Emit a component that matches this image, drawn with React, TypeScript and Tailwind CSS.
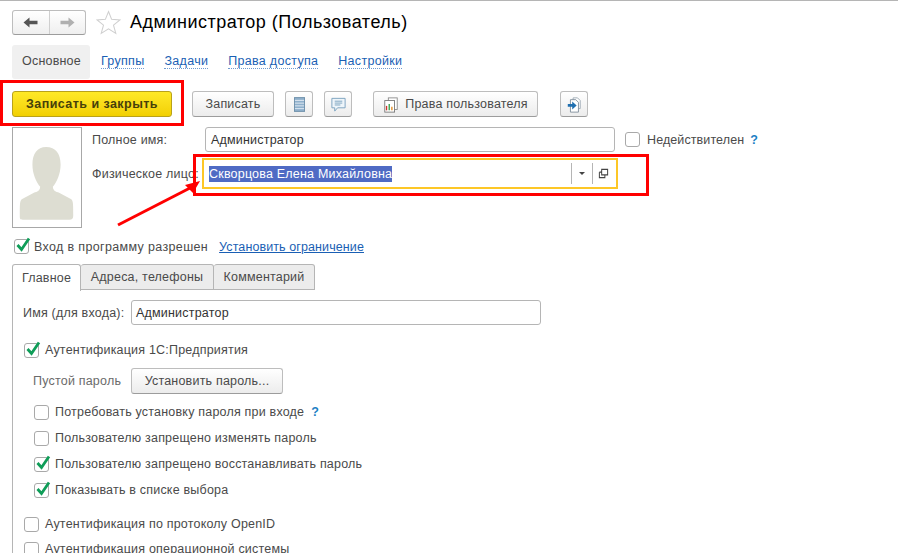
import React from 'react';

const FONT = { fontFamily: '"Liberation Sans", Arial, sans-serif' };

const Box = ({ checked }: { checked?: boolean }) => (
  <span className="relative block w-[15px] h-[15px] shrink-0 rounded-[3px] border border-[#a9a9a9] bg-white">
    {checked && (
      <svg viewBox="0 0 16 16" className="absolute left-[0px] -top-[3px] w-[16px] h-[16px]">
        <path d="M2.5 8 L6.5 12.5 L14 1.5" fill="none" stroke="#0f9d58" strokeWidth="2.8" />
      </svg>
    )}
  </span>
);

const CheckRow = ({ label, checked, help, className }: { label: string; checked?: boolean; help?: boolean; className: string }) => (
  <div className={`flex items-center h-[18px] ${className}`}>
    <Box checked={checked} />
    <span className="ml-[6px] pt-px whitespace-nowrap">{label}</span>
    {help && <span className="ml-[7px] pt-px text-[#1c7fc4] font-bold">?</span>}
  </div>
);

const GrayButton = ({ children, className }: { children: React.ReactNode; className: string }) => (
  <div className={`flex items-center justify-center h-[26px] pt-px rounded-[3px] border border-[#bdbdbd] border-b-[#9c9c9c] bg-gradient-to-b from-white to-[#ececec] shrink-0 ${className}`}>
    {children}
  </div>
);

const Link = ({ children }: { children: React.ReactNode }) => (
  <span className="text-[#1a5fb4] tracking-[0.3px] border-b border-dotted border-[#6f9bd1] leading-[14px]">{children}</span>
);

export default function App() {
  return (
    <div className="relative w-[898px] h-[553px] overflow-hidden bg-white text-[12.5px] text-[#4a4a4a] tracking-[0.2px] border-t border-[#b5b5b5]" style={FONT}>
      {/* Header */}
      <div className="flex items-center h-[33px] pt-[9px] pl-[12px]">
        <div className="flex w-[74px] h-[25px] rounded-[3px] border border-[#bdbdbd] border-b-[#9c9c9c] bg-gradient-to-b from-white to-[#efefef]">
          <div className="flex-1 flex items-center justify-center border-r border-[#cfcfcf]">
            <svg viewBox="0 0 15 11" className="w-[15px] h-[11px]">
              <path d="M0.5 5.5 L6.5 0.5 V3.8 H14.5 V7.2 H6.5 V10.5 Z" fill="#555" />
            </svg>
          </div>
          <div className="flex-1 flex items-center justify-center">
            <svg viewBox="0 0 15 11" className="w-[15px] h-[11px]">
              <path d="M14.5 5.5 L8.5 0.5 V3.8 H0.5 V7.2 H8.5 V10.5 Z" fill="#b0b0b0" />
            </svg>
          </div>
        </div>
        <svg viewBox="0 0 24 24" className="ml-[10px] w-[25px] h-[25px]">
          <path d="M12 1.5 L15 9 L23 9.5 L16.8 14.5 L19 22.5 L12 18 L5 22.5 L7.2 14.5 L1 9.5 L9 9 Z" fill="#fff" stroke="#cfcfcf" strokeWidth="1" />
        </svg>
        <h1 className="ml-[9px] text-[18px] text-black tracking-[0.5px] whitespace-nowrap">Администратор (Пользователь)</h1>
      </div>

      {/* Section links */}
      <div className="flex items-center h-[34px] mt-[10px] ml-[12px] pt-px">
        <div className="flex items-center justify-center w-[78px] h-[34px] pl-px rounded-[3px] bg-[#f0f0f0]">Основное</div>
        <div className="ml-[11px]"><Link>Группы</Link></div>
        <div className="ml-[20px]"><Link>Задачи</Link></div>
        <div className="ml-[20px]"><Link>Права доступа</Link></div>
        <div className="ml-[20px]"><Link>Настройки</Link></div>
      </div>

      {/* Command bar */}
      <div className="flex items-center h-[26px] mt-[13px] ml-[12px]">
        <div className="flex items-center justify-center w-[160px] h-[26px] pt-px rounded-[3px] border border-[#b9a21a] bg-gradient-to-b from-[#ffe926] to-[#f2d000] text-[#46400a] font-bold text-[12.5px] tracking-[0.45px]">
          Записать и закрыть
        </div>
        <GrayButton className="ml-[20px] w-[82px]">Записать</GrayButton>
        <GrayButton className="ml-[11px] w-[28px]">
          <svg viewBox="0 0 12 16" className="w-[11px] h-[15px]">
            <rect x="0.5" y="0.5" width="11" height="15" fill="#8fb0cc" stroke="#6b8ea8" />
            <path d="M1 3.5H11M1 6.5H11M1 9.5H11M1 12.5H11" stroke="#e6eef5" strokeWidth="1" />
          </svg>
        </GrayButton>
        <GrayButton className="ml-[11px] w-[28px]">
          <svg viewBox="0 0 18 18" className="w-[17px] h-[17px]">
            <path d="M2 2.5H16V12.5H8L5 16V12.5H2Z" fill="#eef5fa" stroke="#7ba3bf" />
            <path d="M5 5.5H13M5 7.5H13M5 9.5H11" stroke="#7ba3bf" />
          </svg>
        </GrayButton>
        <GrayButton className="ml-[21px] w-[165px]">
          <svg viewBox="0 0 18 18" className="w-[16px] h-[16px] mr-[6px]">
            <rect x="6" y="1" width="10" height="13" fill="#fff" stroke="#8a8a8a" />
            <rect x="2" y="4" width="11" height="13" fill="#fff" stroke="#777" />
            <path d="M4 15V10" stroke="#d0322d" strokeWidth="1.5" />
            <path d="M7 15V8" stroke="#2f9e44" strokeWidth="1.5" />
            <path d="M10 15V11" stroke="#e08a1e" strokeWidth="1.5" />
          </svg>
          Права пользователя
        </GrayButton>
        <GrayButton className="ml-[22px] w-[28px]">
          <svg viewBox="0 0 18 18" className="w-[16px] h-[16px]">
            <path d="M8 1H13L16 4V13H8Z" fill="#fff" stroke="#9aa7b2" />
            <path d="M5 3H11L14 6V17H5Z" fill="#fff" stroke="#7d8c99" />
            <path d="M2 8H7V5L12 9.5L7 14V11H2Z" fill="#1f6fb0" />
          </svg>
        </GrayButton>
      </div>

      {/* Person block */}
      <div className="flex mt-[10px] ml-[12px]">
        <div className="flex items-center justify-center w-[70px] h-[101px] border border-[#a8a8a8] shrink-0">
          <svg viewBox="0 0 70 101" className="w-[68px] h-[99px]">
            <path d="M34 19 C44 19 49 26 49 37 C49 47 45 55 41 60 C41 63 43 65 47 66 L60 73 C62 75 62 78 62 90 C62 93 61 94 58 94 L10 94 C7 94 7 93 7 90 C7 78 7 75 9 73 L22 66 C26 65 28 63 28 60 C24 55 20 47 20 37 C20 26 25 19 34 19 Z" fill="#ddddd2" />
          </svg>
        </div>
        <div className="ml-[10px]">
          <div className="flex items-center h-[25px]">
            <span className="w-[113px] shrink-0 pt-px">Полное имя:</span>
            <div className="flex items-center w-[410px] h-[25px] pl-[5px] pt-px rounded-[3px] border border-[#b5b5b5] text-[#333]">Администратор</div>
            <div className="ml-[10px]"><Box /></div>
            <span className="ml-[7px] pt-px tracking-[0.1px] whitespace-nowrap">Недействителен</span>
            <span className="ml-[6px] pt-px text-[#1c7fc4] font-bold">?</span>
          </div>
          <div className="flex items-center h-[31px] mt-[6px]">
            <span className="w-[110px] shrink-0 pt-[2px] whitespace-nowrap">Физическое лицо:</span>
            <div className="flex items-center w-[416px] h-[31px] pl-[5px] border-2 border-[#fdc726] bg-white relative">
              <span className="bg-[#4f6bc4] text-white leading-[16px] w-[183px] whitespace-nowrap">Скворцова Елена Михайловна</span>
              <div className="absolute right-[23px] top-[3px] bottom-[3px] w-[22px] flex items-center justify-center border-x border-[#b5b5b5]">
                <span className="block w-0 h-0 border-x-[3px] border-x-transparent border-t-[3px] border-t-[#444]" />
              </div>
              <svg viewBox="0 0 12 12" className="absolute right-[7px] top-[8px] w-[11px] h-[11px]">
                <path d="M4 1.5H10.5V7.5H4Z M1.5 4.5H4 M1.5 4.5V10.5H7.5V7.5" fill="none" stroke="#444" strokeWidth="1.1" />
              </svg>
            </div>
          </div>
        </div>
      </div>

      {/* Login allowed */}
      <div className="flex items-center h-[18px] mt-[9px] ml-[14px]">
        <Box checked />
        <span className="ml-[5px] pt-[2px] tracking-[0.35px] whitespace-nowrap">Вход в программу разрешен</span>
        <span className="ml-[11px] pt-[2px] tracking-[0.1px] text-[#1a5fb4] underline whitespace-nowrap">Установить ограничение</span>
      </div>

      {/* Tabs */}
      <div className="flex h-[27px] mt-[9px] ml-[12px]">
        <div className="flex items-center justify-center w-[69px] h-[27px] pt-px rounded-t-[3px] border border-b-0 border-[#b5b5b5] bg-white z-10">Главное</div>
        <div className="flex items-center justify-center w-[133px] h-[26px] pt-px rounded-t-[3px] border border-l-0 border-[#b5b5b5] bg-[#ececec]">Адреса, телефоны</div>
        <div className="flex items-center justify-center w-[101px] h-[26px] pt-px rounded-t-[3px] border border-l-0 border-[#b5b5b5] bg-[#ececec]">Комментарий</div>
      </div>

      {/* Tab panel */}
      <div className="ml-[12px] -mt-px border-l border-[#b5b5b5] h-[300px] overflow-hidden pt-[10px]">
        <div className="flex items-center h-[25px] ml-[10px]">
          <span className="whitespace-nowrap w-[108px] shrink-0 pt-px">Имя (для входа):</span>
          <div className="flex items-center w-[410px] h-[25px] pl-[4px] pt-px rounded-[3px] border border-[#b5b5b5] text-[#333]">Администратор</div>
        </div>
        <CheckRow className="mt-[16px] ml-[11px]" checked label="Аутентификация 1С:Предприятия" />
        <div className="flex items-center h-[26px] mt-[9px] ml-[20px]">
          <span className="w-[98px] shrink-0 pt-px text-[#6b6b6b]">Пустой пароль</span>
          <GrayButton className="w-[152px]">Установить пароль...</GrayButton>
        </div>
        <CheckRow className="mt-[9px] ml-[21px]" label="Потребовать установку пароля при входе" help />
        <CheckRow className="mt-[8px] ml-[21px]" label="Пользователю запрещено изменять пароль" />
        <CheckRow className="mt-[8px] ml-[21px]" checked label="Пользователю запрещено восстанавливать пароль" />
        <CheckRow className="mt-[8px] ml-[21px]" checked label="Показывать в списке выбора" />
        <CheckRow className="mt-[16px] ml-[11px]" label="Аутентификация по протоколу OpenID" />
        <CheckRow className="mt-[7px] ml-[11px]" label="Аутентификация операционной системы" />
      </div>

      {/* Red annotations */}
      <div className="absolute left-0 top-[79px] w-[184px] h-[46px] border-[3px] border-[#ff0000]" />
      <div className="absolute left-[193px] top-[153px] w-[456px] h-[42px] border-[3px] border-[#ff0000]" />
      <svg className="absolute left-[110px] top-[169px] w-[100px] h-[60px]" viewBox="0 0 100 60">
        <path d="M8 55 L80 18" stroke="#ff0000" strokeWidth="3" />
        <path d="M90 11 L75 15 L83 23 Z" fill="#ff0000" />
      </svg>
    </div>
  );
}
